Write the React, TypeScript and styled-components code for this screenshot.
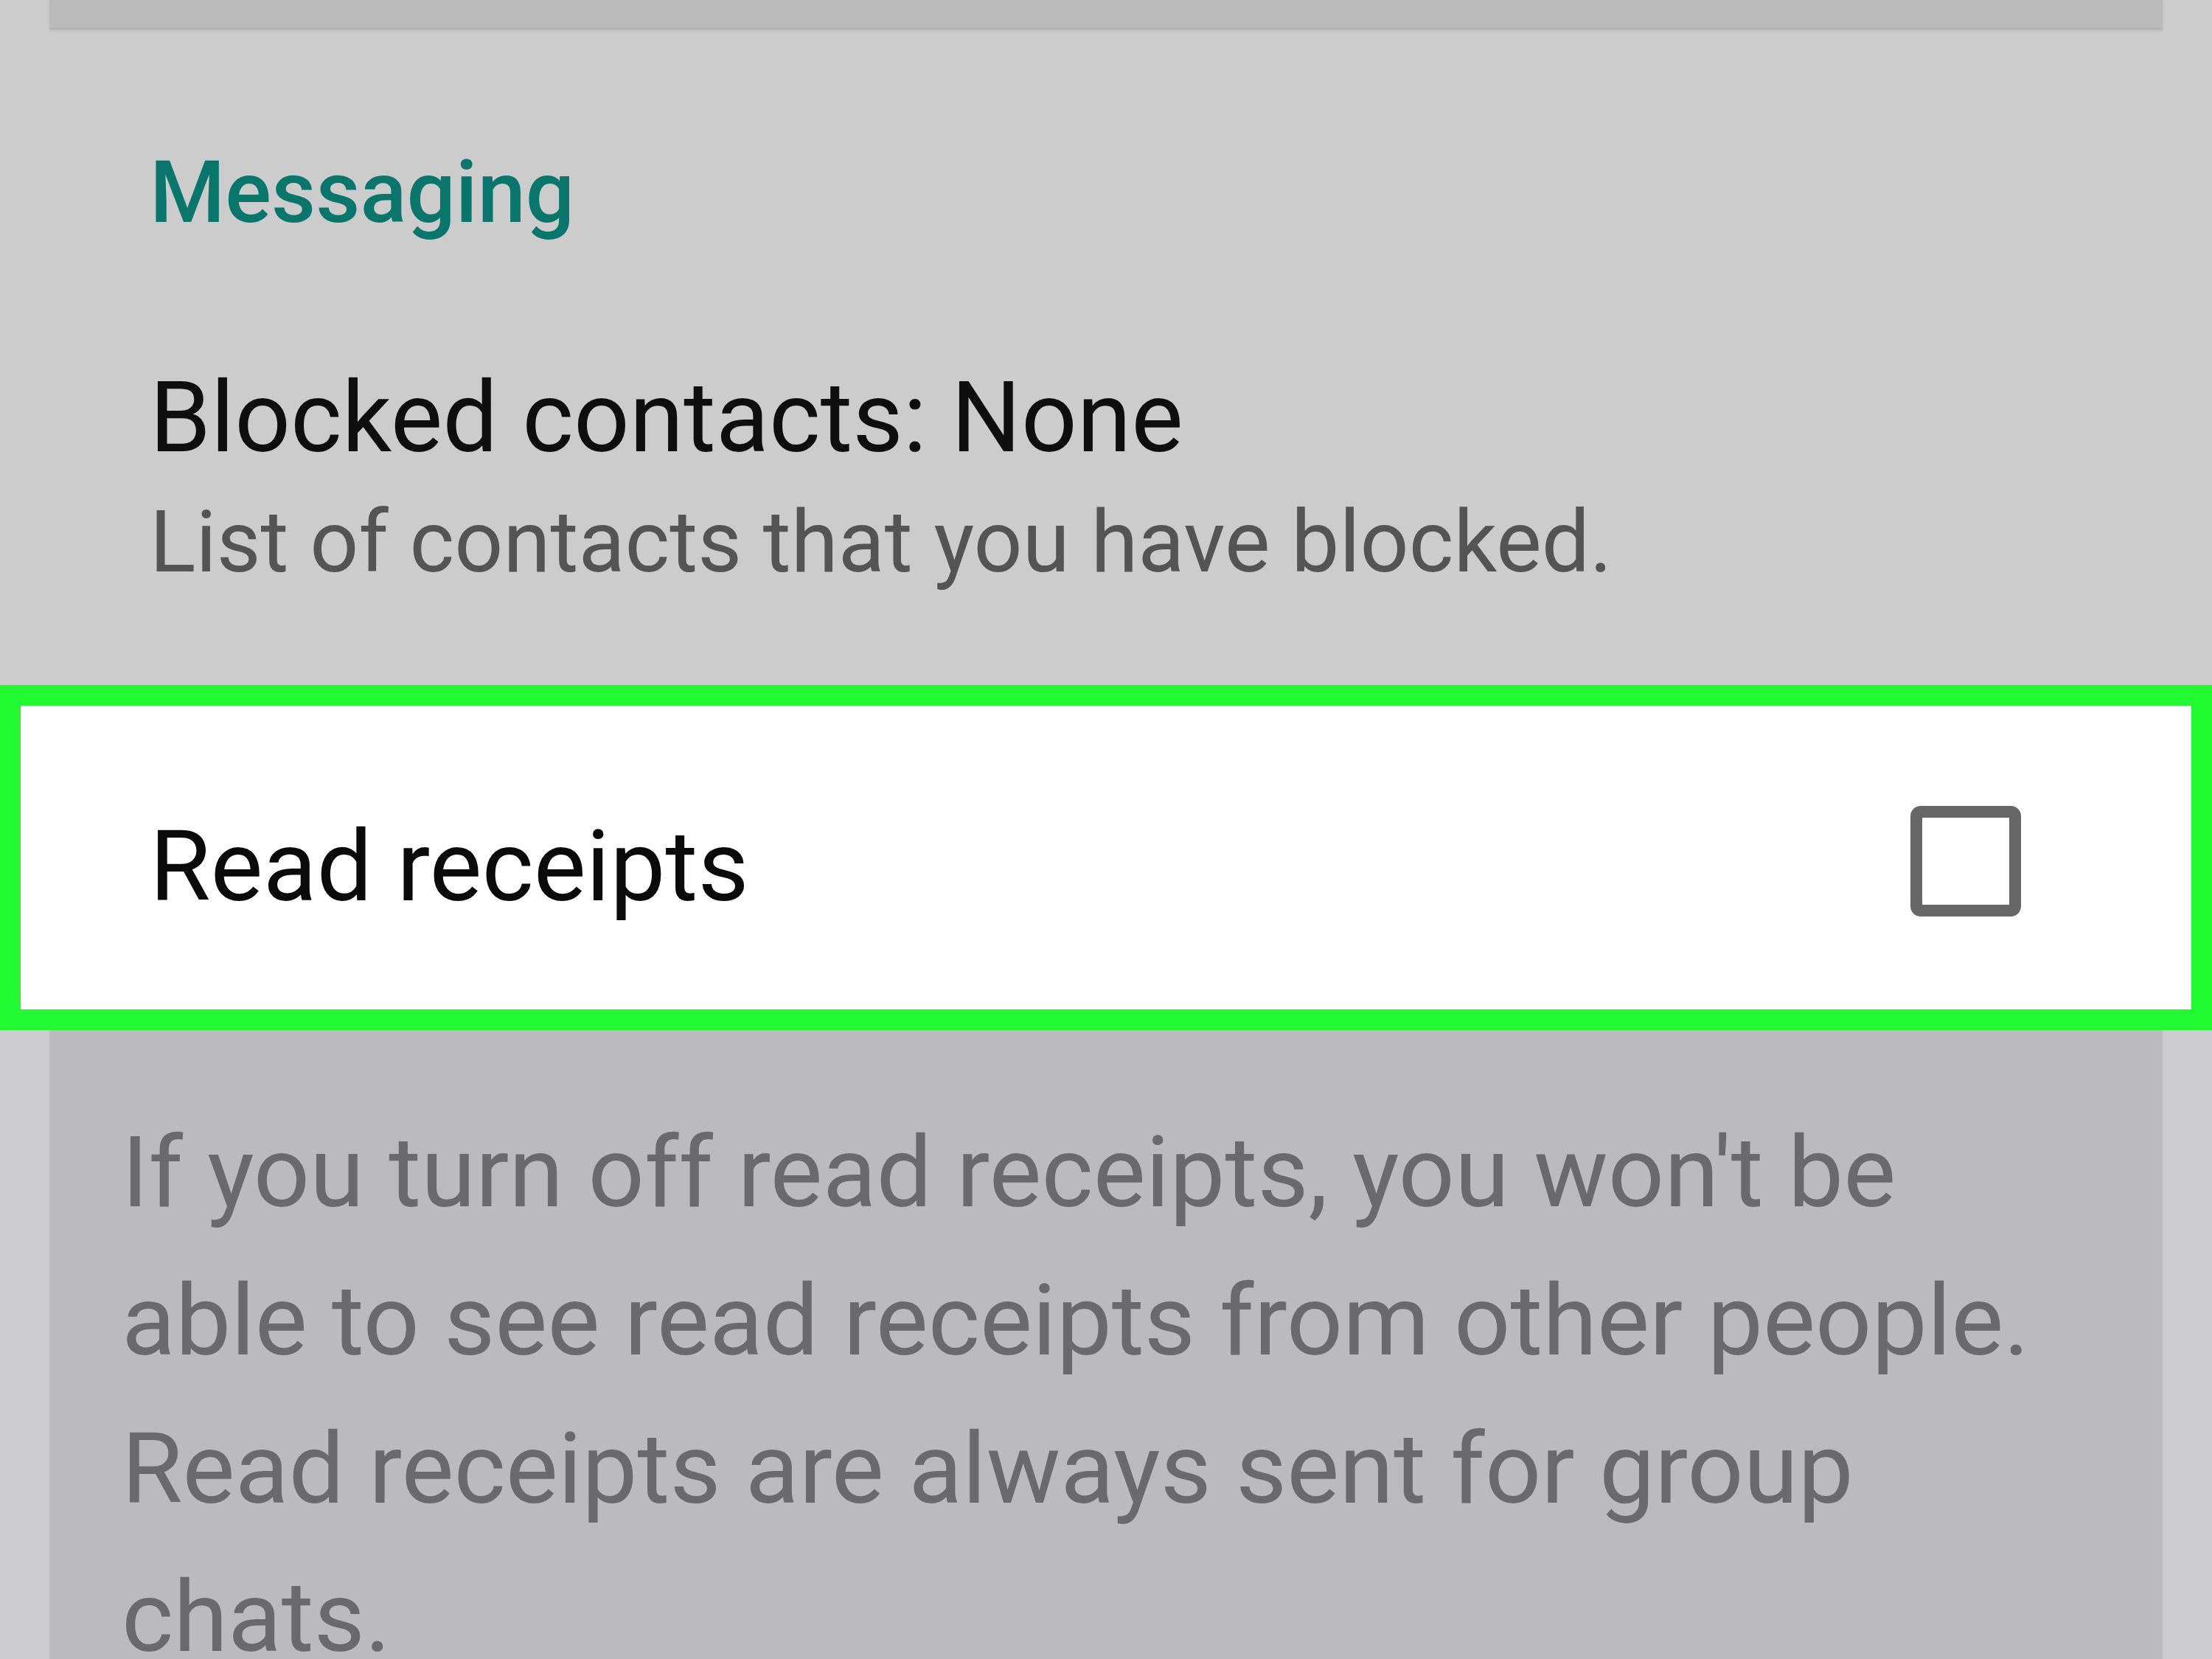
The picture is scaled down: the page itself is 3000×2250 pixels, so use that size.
import {FC} from "react";
import styled, {createGlobalStyle} from "styled-components";

const GlobalStyle = createGlobalStyle`
  html, body {
    margin: 0;
    padding: 0;
  }
  body {
    font-family: Roboto, "Liberation Sans", sans-serif;
    -webkit-font-smoothing: antialiased;
  }
`

const Screen = styled.div`
  display: flex;
  flex-direction: column;
  width: 3000px;
  height: 2250px;
  overflow: hidden;
  background-color: #cccccc;

  & > * {
    flex-shrink: 0;
  }
`

const TopCard = styled.div`
  height: 38px;
  margin: 0 67px;
  background-color: #bababa;
  border-bottom: 2px solid #b2b2b2;
  box-shadow: 0 2px 4px rgba(0, 0, 0, 0.08);
`

const Section = styled.section`
  display: flex;
  flex-direction: column;
  padding: 163px 0 0 203px;
`

const SectionTitle = styled.h2`
  margin: 0;
  font-size: 117px;
  font-weight: 500;
  line-height: 1;
  color: #08766a;
`

const PrefTitle = styled.div`
  margin-top: 180px;
  font-size: 133px;
  line-height: 1;
  color: #0e0e0e;
`

const PrefSummary = styled.div`
  margin-top: 44px;
  font-size: 116px;
  line-height: 1;
  color: #545454;
`

const HighlightRow = styled.div`
  display: flex;
  align-items: center;
  justify-content: space-between;
  box-sizing: border-box;
  height: 468px;
  margin-top: 136px;
  padding: 0 231px 0 175px;
  border: 28px solid #21fa30;
  background-color: #ffffff;
`

const RowLabel = styled.span`
  margin-top: 26px;
  font-size: 134px;
  line-height: 1;
  color: #0a0a0a;
`

const CheckBox = styled.span<{ checked?: boolean }>`
  box-sizing: border-box;
  width: 150px;
  height: 150px;
  margin-top: 9px;
  border: 16px solid #676767;
  border-radius: 14px;
  background-color: ${({checked}) => checked ? '#676767' : '#ffffff'};
`

const DimmedArea = styled.div`
  display: flex;
  flex: 1 1 auto;
  min-height: 0;
  padding: 0 67px;
  background-color: #cccbce;
`

const InfoPanel = styled.div`
  flex: 1;
  padding: 93px 111px 0 98px;
  background-color: #bbbabd;
`

const InfoText = styled.p`
  margin: 0;
  max-width: 2640px;
  font-size: 134px;
  line-height: 201px;
  color: #6a696c;
`

interface IPreference {
    title: string
    summary?: string
}

const Preference: FC<IPreference> = ({title, summary}) => (
    <>
        <PrefTitle>{title}</PrefTitle>
        {summary && <PrefSummary>{summary}</PrefSummary>}
    </>
)

export default function App() {
    return (
        <>
            <GlobalStyle/>
            <Screen>
                <TopCard/>
                <Section>
                    <SectionTitle>Messaging</SectionTitle>
                    <Preference title="Blocked contacts: None"
                                summary="List of contacts that you have blocked."/>
                </Section>
                <HighlightRow>
                    <RowLabel>Read receipts</RowLabel>
                    <CheckBox role="checkbox" aria-checked={false}/>
                </HighlightRow>
                <DimmedArea>
                    <InfoPanel>
                        <InfoText>
                            If you turn off read receipts, you won't be able to see read receipts from
                            other people. Read receipts are always sent for group chats.
                        </InfoText>
                    </InfoPanel>
                </DimmedArea>
            </Screen>
        </>
    )
}
